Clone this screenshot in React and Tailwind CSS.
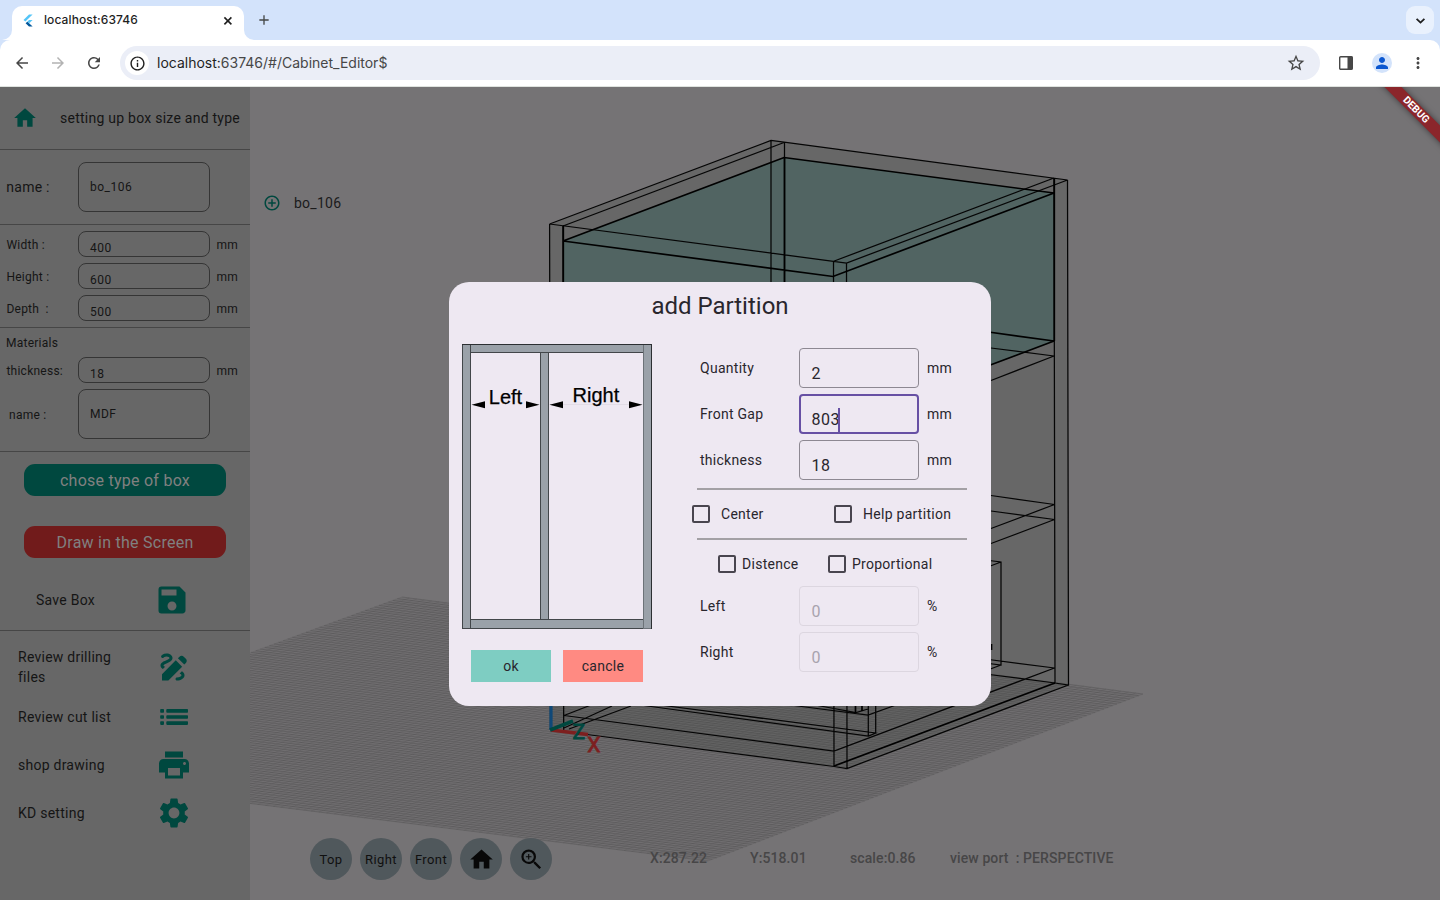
import React from "react";
import {
  MdHome, MdSave, MdDraw, MdPrint, MdSettings, MdZoomIn, MdAddCircleOutline,
  MdStarOutline, MdMoreVert, MdPerson, MdArrowBack, MdArrowForward, MdRefresh,
  MdOutlineInfo, MdAdd,
} from "react-icons/md";

/* ---------- browser chrome ---------- */

function FlutterLogo() {
  return (
    <svg width="10" height="13" viewBox="0 0 10 13">
      <path d="M6 0.5H9.6L2.4 7.6L0.5 5.9Z" fill="#54c5f8" />
      <path d="M6.1 6H9.6L6.2 9.3L4.3 7.6Z" fill="#54c5f8" />
      <path d="M4.3 7.7L6.1 9.3L9.6 12.5H6L2.6 9.3Z" fill="#01579b" />
    </svg>
  );
}

function CloseIcon() {
  return (
    <svg width="13" height="13" viewBox="0 0 13 13" fill="none" stroke="#1f1f1f" strokeWidth="1.6">
      <path d="M3.4 3.4L10.4 10.4M10.4 3.4L3.4 10.4" />
    </svg>
  );
}

function ChevronIcon() {
  return (
    <svg width="17" height="17" viewBox="0 0 17 17" fill="none" stroke="#1f1f1f" strokeWidth="1.8">
      <path d="M4.6 6.8L8.5 10.6L12.4 6.8" />
    </svg>
  );
}

function TabStrip() {
  return (
    <div className="flex h-10 items-end justify-between bg-[#d3e3fb]">
      <div className="flex items-end">
        <svg width="12" height="10" viewBox="0 0 12 10"><path d="M12 0V10H2A10 10 0 0 0 12 0Z" fill="#fff" /></svg>
        <div className="flex h-[34px] w-[232px] items-center rounded-t-[10px] bg-white pr-2.5 pb-1.5 pl-[11px]">
          <FlutterLogo />
          <span className="ml-[11px] flex-1 text-xs font-medium tracking-[0.1px] text-[#1f1f1f]">localhost:63746</span>
          <CloseIcon />
        </div>
        <svg width="12" height="10" viewBox="0 0 12 10"><path d="M0 0V10H10A10 10 0 0 1 0 0Z" fill="#fff" /></svg>
        <div className="flex h-10 w-4 items-center justify-center"><MdAdd size={18} color="#444746" /></div>
      </div>
      <div className="mr-1.5 mb-1.5 flex size-7 items-center justify-center rounded-[9px] bg-[#e9f1fd]">
        <ChevronIcon />
      </div>
    </div>
  );
}

function Toolbar() {
  return (
    <div className="bg-[#d3e3fb]">
      <div className="flex h-[47px] items-center rounded-t-[10px] border-b border-[#dfe3df] bg-white pr-[13px] pl-[13px]">
        <MdArrowBack size={18} color="#474747" />
        <MdArrowForward className="ml-[18px]" size={18} color="#b3b3b3" />
        <MdRefresh className="ml-[18px]" size={18} color="#474747" />
        <div className="ml-[17px] flex h-[34px] w-[1200px] items-center rounded-full bg-[#ebeef7] pr-[14px] pl-[5px]">
          <div className="flex size-6 items-center justify-center rounded-full bg-white">
            <MdOutlineInfo size={17} color="#1f1f1f" />
          </div>
          <span className="ml-2 flex-1 text-sm text-[#474747]">
            <span className="text-[#1f1f1f]">localhost:</span>63746/#/Cabinet_Editor$
          </span>
          <MdStarOutline size={20} color="#474747" />
        </div>
        <svg className="ml-[19px]" width="14" height="14" viewBox="0 0 14 14">
          <rect x="0.7" y="0.7" width="12.6" height="12.6" rx="1" fill="none" stroke="#474747" strokeWidth="1.4" />
          <rect x="8.5" y="0.5" width="5" height="13" fill="#474747" />
        </svg>
        <div className="ml-[19px] flex size-5 items-center justify-center rounded-full bg-[#d3e3fb]">
          <MdPerson size={18} color="#0b57d0" />
        </div>
        <MdMoreVert className="ml-[17px]" size={18} color="#474747" />
      </div>
    </div>
  );
}

/* ---------- sidebar ---------- */

function ListIcon() {
  return (
    <svg width="36" height="36" viewBox="0 0 36 36" fill="#00483f">
      {[10.1, 16.2, 22.3].map((y) => (
        <g key={y}>
          <rect x="4.2" y={y} width="3.8" height="3.6" rx="0.8" />
          <rect x="10.3" y={y} width="21.7" height="3.6" rx="0.8" />
        </g>
      ))}
    </svg>
  );
}

function SizeRow({ label, value }) {
  return (
    <div className="flex h-8 items-center">
      <span className="w-[72px] pt-px pl-[0.4px] whitespace-pre">{label}</span>
      <div className="h-[26px] w-[132px] rounded-lg border border-[#353535] pt-[7px] pl-[11px] text-xs leading-[18px] tracking-[0.5px]">{value}</div>
      <span className="ml-[6.5px] pt-px">mm</span>
    </div>
  );
}

function NavRow({ label, icon: Icon, tall }) {
  return (
    <div className={tall ? "flex h-[72px] items-center" : "flex h-12 items-center"}>
      <span className="w-[138px] pr-8 text-sm leading-5 whitespace-normal">
        <span className={tall ? "" : "whitespace-nowrap"}>{label}</span>
      </span>
      <Icon size={36} color="#00483f" />
    </div>
  );
}

function Sidebar() {
  return (
    <aside className="flex w-[250px] shrink-0 flex-col bg-[#676767] text-xs tracking-[0.25px] text-[#151515]">
      <div className="flex h-[63px] items-center border-b border-[#464646] pl-3">
        <MdHome size={26} color="#00483f" />
        <span className="ml-[22px] text-sm whitespace-nowrap">setting up box size and type</span>
      </div>
      <div className="flex h-[75px] items-center border-b border-[#464646] pl-1.5">
        <span className="w-[72px] pl-[0.3px] text-sm">name :</span>
        <div className="flex h-[50px] w-[132px] items-center rounded-lg border border-[#353535] pl-[11px] tracking-[0.5px]">bo_106</div>
      </div>
      <div className="h-[103px] border-b border-[#464646] pt-[3px] pl-1.5">
        <SizeRow label="Width :" value="400" />
        <SizeRow label="Height :" value="600" />
        <SizeRow label="Depth  :" value="500" />
      </div>
      <div className="h-[124px] border-b border-[#464646] pt-1.5 pl-1.5">
        <div className="h-5 leading-[18px]">Materials</div>
        <SizeRow label="thickness:" value="18" />
        <div className="mt-[3px] flex h-[50px] items-center">
          <span className="w-[72px] pt-px pl-[3px]">name :</span>
          <div className="flex h-[50px] w-[132px] items-center rounded-lg border border-[#353535] pl-[11px] tracking-[0.5px]">MDF</div>
        </div>
      </div>
      <div className="flex h-[179px] flex-col border-b border-[#464646] px-6 pt-3 text-base text-[#808080]">
        <div className="flex h-8 items-center justify-center rounded-[11px] bg-[#00483f] pt-0.5">chose type of box</div>
        <div className="mt-[30px] flex h-8 items-center justify-center rounded-[11px] bg-[#711b1b] pt-0.5">Draw in the Screen</div>
        <div className="mt-6 flex items-center text-sm text-[#151515]">
          <span className="ml-3 w-[118px]">Save Box</span>
          <MdSave size={36} color="#00483f" />
        </div>
      </div>
      <div className="pl-[18px]">
        <NavRow label="Review drilling files" icon={MdDraw} tall />
        <div className="-mt-[10px]">
          <NavRow label="Review cut list" icon={ListIcon} />
          <NavRow label="shop drawing" icon={MdPrint} />
          <NavRow label="KD setting" icon={MdSettings} />
        </div>
      </div>
    </aside>
  );
}

/* ---------- 3D viewport ---------- */

const T = [402, 597], R = [1143, 694], B = [708, 861], L = [-55, 765];
const lerp = (p, q, t) => [p[0] + (q[0] - p[0]) * t, p[1] + (q[1] - p[1]) * t];
const seg = (p, q) => `M${p[0].toFixed(1)} ${p[1].toFixed(1)}L${q[0].toFixed(1)} ${q[1].toFixed(1)}`;
const steps = Array.from({ length: 101 }, (_, i) => i / 100);
const gridA = steps.map((t) => seg(lerp(T, L, t), lerp(R, B, t))).join("");
const gridB = steps.map((t) => seg(lerp(T, R, t), lerp(L, B, t))).join("");

const THIN = [
  "M549.6 224L771 140.5L1067.5 180L846.5 263L549.6 224",
  "M563 226L784 142.5M833 261.5L1054 178",
  "M549.6 224L550.5 729M563 226L563.7 730M771 140.5V400M784.5 142.5V400",
  "M833.5 261.5L834 766M846.5 263L847 768M1054 178L1055 683L1068.5 685L1067.5 180",
  "M991 348L1054 356L991 380.5",
  "M991 495.5L1054.5 504.5L991 528.5M991 511L1054.5 519.5L991 543.5",
  "M985 560L1001 562V665L985 663M1001 562L985 568M1001 665L985 671",
  "M985 659L1054.5 668L834 751L564 715.5",
  "M985 674L1055 683M1068.5 685L847 768.5L834 766.5L552 730",
  "M564 715.5L591 705M564 728L612 706M569 729L631 706",
  "M640 705L868.5 736L875.7 733L660 705M868.3 700V736M875.7 700V733",
  "M790 705L868 715L896 705M815 705L856 712.5L868 709",
].join("");
const THICK = "M563 241L784 157.5L1054 193L833 276.5ZM985 331.5L1054 341L985 367M563.3 226V300M784.5 157V300M1054.3 178V341M1055 683L834 766M855.5 704V713M862 704V711M991.5 644V650";

function Viewport() {
  return (
    <svg className="absolute inset-0" width="1190" height="813" viewBox="250 87 1190 813">
      <polygon points="549.6,224 771,140.5 1067.5,180 1068.5,685 847,768 551,729" fill="#676767" />
      <polygon points="563,241 784,157.5 1054,193 1054,341 833,425 563,389" fill="#516462" />
      <polygon points="402,597 1143,694 708,861 -55,765" fill="#000" fillOpacity="0.035" />
      <path d={gridA} stroke="#3a3a3a" strokeOpacity="0.27" strokeWidth="1" />
      <path d={gridB} stroke="#3a3a3a" strokeOpacity="0.12" strokeWidth="1" />
      <path d={THIN} fill="none" stroke="#050505" strokeWidth="1.25" />
      <path d={THICK} fill="none" stroke="#000" strokeWidth="1.7" />
      <path d="M551 690V730" stroke="#0f4878" strokeWidth="3.2" />
      <path d="M551 730L588 734.5" stroke="#7d1f1f" strokeWidth="3.6" />
      <path d="M550 730L573 721" stroke="#00483f" strokeWidth="3.6" />
      <text x="572.5" y="739" fontSize="21" stroke="#00483f" strokeWidth="0.8" fill="#00483f">Z</text>
      <text x="587.3" y="752" fontSize="21" stroke="#7d1f1f" strokeWidth="0.8" fill="#7d1f1f">X</text>
    </svg>
  );
}

function ViewButton({ children }) {
  return (
    <div className="flex size-[42px] items-center justify-center rounded-full bg-[#50585c] text-[13px] tracking-[0.4px] text-[#101010]">
      {children}
    </div>
  );
}

function BottomBar() {
  return (
    <div className="absolute bottom-5 left-[60px] flex items-center">
      <div className="flex gap-2">
        <ViewButton><span className="pt-0.5">Top</span></ViewButton>
        <ViewButton><span className="pt-0.5">Right</span></ViewButton>
        <ViewButton><span className="pt-0.5">Front</span></ViewButton>
        <ViewButton><MdHome size={27} color="#080808" /></ViewButton>
        <ViewButton><MdZoomIn size={27} color="#080808" /></ViewButton>
      </div>
      <div className="ml-[98px] flex pb-0.5 text-sm font-medium tracking-[0.1px] text-[#474647]">
        <span className="w-[100px]">X:287.22</span>
        <span className="w-[100px]">Y:518.01</span>
        <span className="w-[100px]">scale:0.86</span>
        <span className="whitespace-pre">view port  : PERSPECTIVE</span>
      </div>
    </div>
  );
}

/* ---------- dialog ---------- */

function PartitionDiagram() {
  return (
    <svg width="190" height="285" viewBox="462 344 190 285">
      <g fill="#9aa1a9" stroke="#42464a" strokeWidth="1">
        <rect x="462.5" y="344.5" width="189" height="8" />
        <rect x="462.5" y="344.5" width="8" height="284" />
        <rect x="540.5" y="352.5" width="8" height="267" />
        <rect x="470.5" y="619.5" width="173" height="9" />
        <rect x="643.5" y="344.5" width="8" height="284" stroke="#6c7278" />
      </g>
      <path d="M462 344.5H652M651.5 344V629" stroke="#2c2f33" fill="none" />
      <path d="M550 404.5H642" stroke="#e2dce6" />
      <path d="M471.5 404.8L485 401.3V408.3ZM539.5 404.8L526 401.3V408.3ZM549.5 404.8L563 401.3V408.3ZM642.5 404.8L629 401.3V408.3Z" fill="#000" />
      <g fontFamily="'Liberation Sans', Arial, sans-serif" letterSpacing="0" fontSize="20" fill="#000" stroke="#000" strokeWidth="0.25">
        <text x="488.8" y="404">Left</text>
        <text x="572.5" y="402">Right</text>
      </g>
    </svg>
  );
}

function FieldRow({ label, value, unit = "mm", focused, disabled }) {
  const border = focused
    ? "h-10 w-[120px] rounded border-2 border-[#6750a4] pt-3 pl-[10.5px]"
    : disabled
      ? "h-10 w-[120px] rounded border border-[#dcd6e0] pt-[13px] pl-[11.5px] text-[#a8a3ae]"
      : "h-10 w-[120px] rounded border border-[#8d8892] pt-[13px] pl-[11.5px]";
  return (
    <div className="flex h-[46px] items-center">
      <span className="w-[99px]">{label}</span>
      <div className={border}>
        <div className="flex h-6 items-center text-base leading-6 tracking-[0.5px]">
          {value}
          {focused && <span className="-ml-[2px] h-6 w-0.5 bg-[#6750a4]" />}
        </div>
      </div>
      <span className="ml-2">{unit}</span>
    </div>
  );
}

function Check() {
  return <span className="size-[18px] shrink-0 rounded-[2px] border-2 border-[#49454f]" />;
}

function Dialog() {
  return (
    <div className="flex h-[424px] w-[542px] flex-col rounded-[20px] bg-[#eee8f2] text-sm tracking-[0.27px] text-[#29262d]">
      <h1 className="pt-2 text-center text-2xl leading-8 tracking-[0px]">add Partition</h1>
      <div className="flex pl-[13px]">
        <div className="pt-[22px]">
          <PartitionDiagram />
          <div className="flex gap-3 pt-[21px] pl-[9px]">
            <div className="flex h-8 w-20 items-center justify-center bg-[#7ecdc2]">ok</div>
            <div className="flex h-8 w-20 items-center justify-center bg-[#ff8a82]">cancle</div>
          </div>
        </div>
        <div className="ml-10 pt-[23px]">
          <div className="pl-2">
            <FieldRow label="Quantity" value="2" />
            <FieldRow label="Front Gap" value="803" focused />
            <FieldRow label="thickness" value="18" />
          </div>
          <div className="mt-[5px] ml-[5px] h-0.5 w-[270px] bg-[#a3a0a5]" />
          <div className="flex h-12 items-center">
            <Check /><span className="ml-[11px] w-[113px]">Center</span>
            <Check /><span className="ml-[11px]">Help partition</span>
          </div>
          <div className="ml-[5px] h-0.5 w-[270px] bg-[#a3a0a5]" />
          <div className="flex h-[43px] items-center pt-[5px] pl-[26px]">
            <Check /><span className="ml-1.5 w-[86px]">Distence</span>
            <Check /><span className="ml-1.5">Proportional</span>
          </div>
          <div className="pl-2">
            <FieldRow label="Left" value="0" unit="%" disabled />
            <FieldRow label="Right" value="0" unit="%" disabled />
          </div>
        </div>
      </div>
    </div>
  );
}

export default function App() {
  return (
    <div className="flex h-[900px] w-[1440px] flex-col overflow-hidden font-[Roboto,sans-serif]">
      <header className="font-[Inter,sans-serif]">
        <TabStrip />
        <Toolbar />
      </header>
      <div className="relative flex h-[813px]">
        <Sidebar />
        <main className="relative flex-1 overflow-hidden bg-[#757375]">
          <Viewport />
          <div className="relative flex items-center pt-[106px] pl-[13px] text-sm tracking-[0.25px] text-[#1b1b1c]">
            <MdAddCircleOutline size={18} color="#00483f" />
            <span className="ml-[13px]">bo_106</span>
          </div>
          <BottomBar />
          <div className="absolute top-[17px] right-[-36px] flex h-3 w-[120px] rotate-45 items-center justify-center bg-[#8b262b] text-[10.2px] font-bold text-white shadow-[0_0_6px_rgba(0,0,0,0.5)]">
            DEBUG
          </div>
        </main>
        <div className="absolute inset-0 flex items-center justify-center">
          <Dialog />
        </div>
      </div>
    </div>
  );
}
